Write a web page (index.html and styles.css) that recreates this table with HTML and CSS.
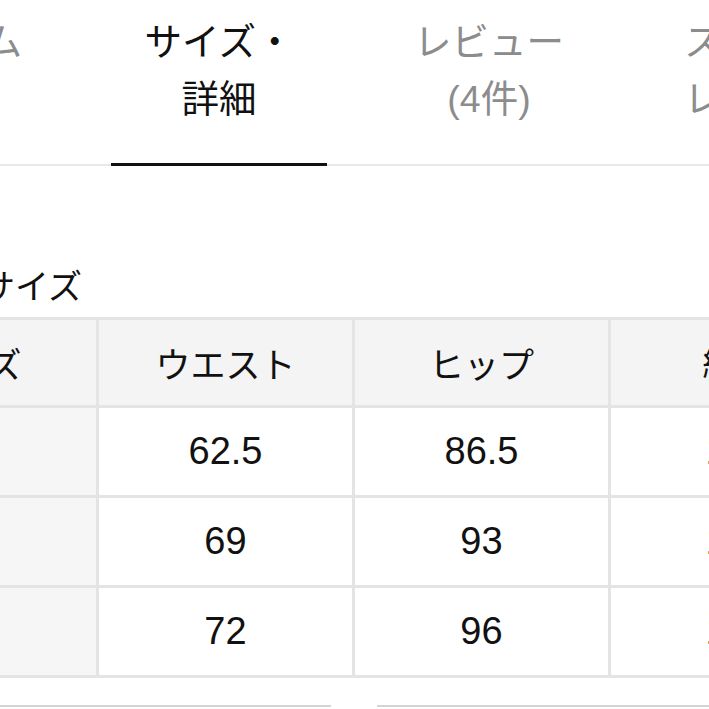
FILE: index.html
```html
<!DOCTYPE html>
<html lang="ja">
<head>
<meta charset="utf-8">
<title>サイズ・詳細</title>
<link rel="stylesheet" href="styles.css">
</head>
<body>
<div class="page">
  <nav class="tabs">
    <div class="tab"><span class="tab-label">アイテム<br>&nbsp;</span></div>
    <div class="tab tab-active"><span class="tab-label">サイズ・<br>詳細</span></div>
    <div class="tab"><span class="tab-label">レビュー<br>(4件)</span></div>
    <div class="tab"><span class="tab-label">スタッフ<br>レビュー</span></div>
  </nav>

  <section class="size-section">
    <h2 class="size-title">サイズ</h2>
    <div class="size-table">
      <div class="cell head">サイズ</div>
      <div class="cell head">ウエスト</div>
      <div class="cell head">ヒップ</div>
      <div class="cell head">総丈</div>

      <div class="cell side">S</div>
      <div class="cell num">62.5</div>
      <div class="cell num">86.5</div>
      <div class="cell num">104</div>

      <div class="cell side">M</div>
      <div class="cell num">69</div>
      <div class="cell num">93</div>
      <div class="cell num">105</div>

      <div class="cell side">L</div>
      <div class="cell num">72</div>
      <div class="cell num">96</div>
      <div class="cell num">106</div>
    </div>
  </section>

  <div class="actions">
    <div class="action-box"></div>
    <div class="action-box"></div>
  </div>
</div>
</body>
</html>
```

FILE: styles.css
```css
html, body {
  margin: 0;
  padding: 0;
  background: #ffffff;
  overflow: hidden;
}

body {
  font-family: "Liberation Sans", "Noto Sans CJK JP", sans-serif;
  color: #111111;
}

.page {
  width: 1100px;
  margin-left: -186px;
}

/* Tabs */
.tabs {
  display: flex;
  border-bottom: 2px solid #e8e8e8;
}

.tab {
  width: 270px;
  flex: none;
  display: flex;
  justify-content: center;
  padding: 0 27px;
  box-sizing: border-box;
}

.tab-label {
  display: block;
  width: 100%;
  text-align: center;
  font-size: 37.5px;
  line-height: 57px;
  color: #8c8c8c;
  padding: 14px 0 35px;
  margin-bottom: -2px;
  border-bottom: 3px solid transparent;
  white-space: nowrap;
}

.tab-active .tab-label {
  color: #111111;
  border-bottom-color: #111111;
}

/* Size section */
.size-section {
  padding-top: 99px;
}

.size-title {
  margin: 0 0 0 167px;
  font-size: 34px;
  font-weight: normal;
  line-height: 44px;
  color: #111111;
}

.size-table {
  margin-top: 8px;
  margin-left: 26px;
  display: grid;
  grid-template-columns: repeat(4, 253px);
  grid-template-rows: 85px repeat(3, 87px);
  gap: 3px;
  padding: 3px;
  width: max-content;
  background: #e4e4e4;
}

.cell {
  display: flex;
  align-items: center;
  justify-content: center;
  background: #ffffff;
  font-size: 35px;
}

.head {
  background: #f4f4f4;
}

.side {
  background: #f6f6f6;
  color: #111111;
}

.num {
  font-size: 38px;
}

/* Buttons below */
.actions {
  display: flex;
  gap: 46px;
  margin-top: 27px;
  margin-left: 150px;
}

.action-box {
  width: 367px;
  height: 40px;
  border-top: 2px solid #d4d4d4;
}
```
